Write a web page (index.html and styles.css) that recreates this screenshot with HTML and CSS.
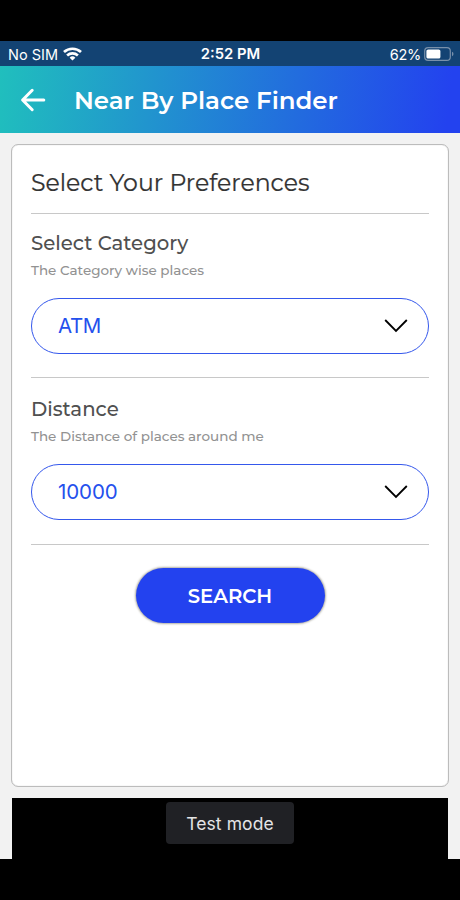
FILE: index.html
```html
<!DOCTYPE html>
<html lang="en">
<head>
<meta charset="utf-8">
<title>Near By Place Finder</title>
<link rel="stylesheet" href="styles.css">
</head>
<body>
<div class="screen">
  <div class="status">
    <div class="carrier"><span>No SIM</span>
      <svg width="19" height="14" viewBox="0 0 19 14" fill="none" stroke="#fff" stroke-width="2.7"><path d="M1 5.1a12.4 12.4 0 0 1 17 0M4.1 8.4a8 8 0 0 1 10.8 0"/><path d="M9.5 13.5 6.6 10.7a4.2 4.2 0 0 1 5.8 0z" fill="#fff" stroke="none"/></svg>
    </div>
    <span class="time">2:52 PM</span>
    <div class="power"><span>62%</span>
      <svg width="30" height="14" viewBox="0 0 30 14"><rect x=".7" y=".7" width="25.6" height="12.6" rx="3.4" fill="none" stroke="#7890aa" stroke-width="1.2"/><rect x="2.4" y="2.4" width="14" height="9.2" rx="1.7" fill="#fff"/><path d="M28 4.8v4.4q1.5-.6 1.5-2.2T28 4.8" fill="#7890aa"/></svg>
    </div>
  </div>
  <header class="header">
    <svg class="back" width="26" height="24" viewBox="0 0 26 24" fill="none" stroke="#fff" stroke-width="3" stroke-linecap="round" stroke-linejoin="round"><path d="M12.2 2.3 2.6 12l9.6 9.7M3 12h20.8"/></svg>
    <h1>Near By Place Finder</h1>
  </header>
  <main class="content">
    <section class="card">
      <h2>Select Your Preferences</h2>
      <div class="group category">
        <h3>Select Category</h3>
        <p>The Category wise places</p>
        <div class="select"><span class="atm">ATM</span><svg width="24" height="14" viewBox="0 0 24 14" fill="none" stroke="#000" stroke-width="1.8"><path d="M1.2 1 12 12 22.8 1"/></svg></div>
      </div>
      <div class="group distance">
        <h3>Distance</h3>
        <p>The Distance of places around me</p>
        <div class="select"><span class="amount">10000</span><svg width="24" height="14" viewBox="0 0 24 14" fill="none" stroke="#000" stroke-width="1.8"><path d="M1.2 1 12 12 22.8 1"/></svg></div>
      </div>
      <button class="search">SEARCH</button>
    </section>
    <div class="ad"><span class="test">Test mode</span></div>
  </main>
</div>
</body>
</html>
```

FILE: styles.css
```css
* { box-sizing: border-box; }
body { margin: 0; background: #000; font-family: Montserrat, Inter, sans-serif; }
h1, h2, h3, p { margin: 0; white-space: nowrap; }
svg { display: block; flex: none; }
.screen { width: 460px; height: 900px; padding-top: 41px; background: #000; }
.status { height: 25px; padding: 0 7px 0 8px; display: grid; grid-template-columns: 1fr auto 1fr; align-items: center; background: #134373; color: #fff; font: 400 14.5px/25px Inter, sans-serif; }
.carrier, .power { display: flex; align-items: center; gap: 5px; }
.power { justify-content: flex-end; gap: 3px; margin-right: -1px; letter-spacing: -.3px; }
.time { font-weight: 600; font-size: 14.8px; padding-top: 1px; }
.header { height: 67px; display: flex; align-items: center; padding-left: 20px; background: linear-gradient(97deg, #20bfbd 0%, #2342ef 97%); color: #fff; }
.header h1 { margin-left: 28px; font-size: 24.5px; line-height: 32px; font-weight: 600; }
.content { height: 726px; padding: 11px 11px 0 11px; background: #f2f2f2; }
.card { height: 643px; padding: 0 19px; border: 1px solid #bcbcbc; border-radius: 7px; background: #fff; display: flex; flex-direction: column; box-shadow: inset 0 0 1px #bbb; }
.card h2 { height: 69px; padding-top: 22px; border-bottom: 1px solid #c8c8c8; color: #333; font-size: 23.6px; line-height: 32px; font-weight: 400; -webkit-text-stroke: .2px #333; }
.group { border-bottom: 1px solid #c8c8c8; }
.category { height: 164px; padding-top: 16px; }
.distance { height: 167px; padding-top: 18px; }
.group h3 { color: #505050; font-size: 19.7px; line-height: 26px; font-weight: 500; }
.group p { margin-top: 4px; color: #929292; font-size: 13.5px; line-height: 20px; font-weight: 500; }
.select { height: 56px; margin-top: 18px; border: 1px solid #3558ec; border-radius: 28px; padding: 0 20px 0 26px; display: flex; align-items: center; justify-content: space-between; color: #2450ed; font: 400 20.5px/28px Inter, sans-serif; }
.atm { letter-spacing: -.5px; }
.amount { letter-spacing: -.1px; }
.search { width: 189px; height: 55px; margin: 23px auto 0; border: 0; border-radius: 28px; background: #2342ef; color: #fff; font: 600 19.6px/28px Montserrat, Inter, sans-serif; box-shadow: 0 0 2px 1px rgba(60,55,35,.4); }
.ad { height: 61px; margin: 11px 1px 0; padding-top: 4px; background: #000; display: flex; justify-content: center; align-items: flex-start; }
.test { width: 128px; height: 42px; border-radius: 4px; background: #202125; color: #e4e4e6; text-align: center; font: 400 17.5px/43px Inter, sans-serif; letter-spacing: .1px; }
```
